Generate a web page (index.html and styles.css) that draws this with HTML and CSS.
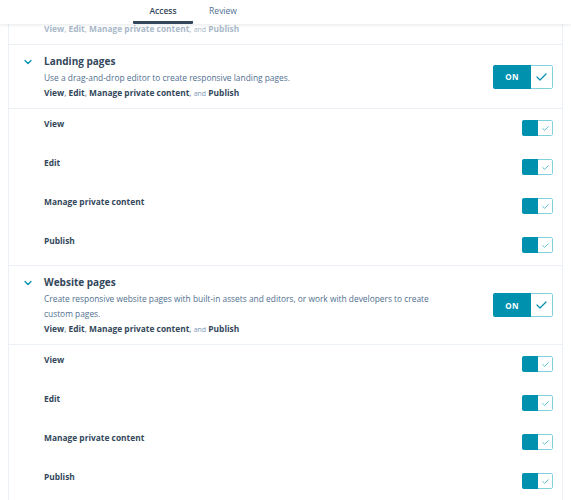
FILE: index.html
```html
<!DOCTYPE html>
<html lang="en">
<head>
    <meta charset="UTF-8">
    <meta name="viewport" content="width=device-width, initial-scale=1.0">
    <title>Permissions - Access</title>
    <link rel="stylesheet" href="styles.css">
</head>
<body>
    <div class="tabs">
        <div class="tab active">Access</div>
        <div class="tab">Review</div>
    </div>
    <div class="panel">
        <div class="row-partial">
            <div class="perms faded"><b>View</b>, <b>Edit</b>, <b>Manage private content</b>, <span class="and">and</span> <b>Publish</b></div>
        </div>

        <div class="section">
            <div class="chevron"><svg width="8" height="6" viewBox="0 0 8 6"><path d="M1 1.5 L4 4.5 L7 1.5" fill="none" stroke="#0091ae" stroke-width="1.3" stroke-linecap="round" stroke-linejoin="round"/></svg></div>
            <div class="section-text">
                <div class="title">Landing pages</div>
                <div class="desc">Use a drag-and-drop editor to create responsive landing pages.</div>
                <div class="perms"><b>View</b>, <b>Edit</b>, <b>Manage private content</b>, <span class="and">and</span> <b>Publish</b></div>
            </div>
            <div class="toggle big">
                <span class="on">ON</span>
                <span class="check"><svg width="11" height="8" viewBox="0 0 11 8"><path d="M1 4 L4 7 L10 1" fill="none" stroke="#0091ae" stroke-width="1.2" stroke-linecap="round" stroke-linejoin="round"/></svg></span>
            </div>
        </div>
        <div class="sub">
            <div class="sub-row"><div class="label">View</div><div class="toggle small"><span class="on"></span><span class="check"><svg width="7" height="5" viewBox="0 0 7 5"><path d="M0.7 2.5 L2.6 4.3 L6.3 0.7" fill="none" stroke="#4bb5cb" stroke-width="0.9" stroke-linecap="round" stroke-linejoin="round"/></svg></span></div></div>
            <div class="sub-row"><div class="label">Edit</div><div class="toggle small"><span class="on"></span><span class="check"><svg width="7" height="5" viewBox="0 0 7 5"><path d="M0.7 2.5 L2.6 4.3 L6.3 0.7" fill="none" stroke="#4bb5cb" stroke-width="0.9" stroke-linecap="round" stroke-linejoin="round"/></svg></span></div></div>
            <div class="sub-row"><div class="label">Manage private content</div><div class="toggle small"><span class="on"></span><span class="check"><svg width="7" height="5" viewBox="0 0 7 5"><path d="M0.7 2.5 L2.6 4.3 L6.3 0.7" fill="none" stroke="#4bb5cb" stroke-width="0.9" stroke-linecap="round" stroke-linejoin="round"/></svg></span></div></div>
            <div class="sub-row"><div class="label">Publish</div><div class="toggle small"><span class="on"></span><span class="check"><svg width="7" height="5" viewBox="0 0 7 5"><path d="M0.7 2.5 L2.6 4.3 L6.3 0.7" fill="none" stroke="#4bb5cb" stroke-width="0.9" stroke-linecap="round" stroke-linejoin="round"/></svg></span></div></div>
        </div>

        <div class="section">
            <div class="chevron"><svg width="8" height="6" viewBox="0 0 8 6"><path d="M1 1.5 L4 4.5 L7 1.5" fill="none" stroke="#0091ae" stroke-width="1.3" stroke-linecap="round" stroke-linejoin="round"/></svg></div>
            <div class="section-text">
                <div class="title">Website pages</div>
                <div class="desc">Create responsive website pages with built-in assets and editors, or work with developers to create custom pages.</div>
                <div class="perms"><b>View</b>, <b>Edit</b>, <b>Manage private content</b>, <span class="and">and</span> <b>Publish</b></div>
            </div>
            <div class="toggle big">
                <span class="on">ON</span>
                <span class="check"><svg width="11" height="8" viewBox="0 0 11 8"><path d="M1 4 L4 7 L10 1" fill="none" stroke="#0091ae" stroke-width="1.2" stroke-linecap="round" stroke-linejoin="round"/></svg></span>
            </div>
        </div>
        <div class="sub">
            <div class="sub-row"><div class="label">View</div><div class="toggle small"><span class="on"></span><span class="check"><svg width="7" height="5" viewBox="0 0 7 5"><path d="M0.7 2.5 L2.6 4.3 L6.3 0.7" fill="none" stroke="#4bb5cb" stroke-width="0.9" stroke-linecap="round" stroke-linejoin="round"/></svg></span></div></div>
            <div class="sub-row"><div class="label">Edit</div><div class="toggle small"><span class="on"></span><span class="check"><svg width="7" height="5" viewBox="0 0 7 5"><path d="M0.7 2.5 L2.6 4.3 L6.3 0.7" fill="none" stroke="#4bb5cb" stroke-width="0.9" stroke-linecap="round" stroke-linejoin="round"/></svg></span></div></div>
            <div class="sub-row"><div class="label">Manage private content</div><div class="toggle small"><span class="on"></span><span class="check"><svg width="7" height="5" viewBox="0 0 7 5"><path d="M0.7 2.5 L2.6 4.3 L6.3 0.7" fill="none" stroke="#4bb5cb" stroke-width="0.9" stroke-linecap="round" stroke-linejoin="round"/></svg></span></div></div>
            <div class="sub-row"><div class="label">Publish</div><div class="toggle small"><span class="on"></span><span class="check"><svg width="7" height="5" viewBox="0 0 7 5"><path d="M0.7 2.5 L2.6 4.3 L6.3 0.7" fill="none" stroke="#4bb5cb" stroke-width="0.9" stroke-linecap="round" stroke-linejoin="round"/></svg></span></div></div>
        </div>
    </div>
</body>
</html>
```
FILE: styles.css
```css
body {
    margin: 0;
    font-family: "Open Sans", "Noto Sans", sans-serif;
    color: #33475b;
    background: #fff;
    overflow: hidden;
}
.tabs {
    height: 24px;
    display: flex;
    padding-left: 133px;
    background: #fff;
    box-shadow: 0 1px 3px rgba(45, 62, 80, 0.12);
    position: relative;
    z-index: 1;
}
.tab {
    width: 60px;
    height: 24px;
    line-height: 22px;
    text-align: center;
    font-size: 8.5px;
    color: #516f90;
    box-sizing: border-box;
}
.tab.active {
    font-weight: 600;
    color: #33475b;
    border-bottom: 3px solid #33475b;
    border-radius: 0 0 1px 1px;
}
.panel {
    margin: 0 8px;
    border-left: 1px solid #eaf0f6;
    border-right: 1px solid #eaf0f6;
}
.row-partial {
    height: 20px;
    padding-left: 35px;
    border-bottom: 1px solid #eaf0f6;
}
.row-partial .perms {
    line-height: 10px;
}
.perms {
    font-size: 8.4px;
    line-height: 15px;
    color: #516f90;
}
.perms b {
    font-weight: 700;
    color: #33475b;
}
.perms .and {
    font-size: 7px;
    line-height: 1;
    color: #7c98b6;
}
.perms.faded, .perms.faded b, .perms.faded .and {
    color: #a9b8c9;
}
.section {
    display: flex;
    align-items: center;
    padding: 8px 9px 8px 15px;
    border-bottom: 1px solid #eaf0f6;
}
.chevron {
    width: 20px;
    align-self: flex-start;
    padding-top: 6px;
}
.chevron svg {
    display: block;
}
.section-text {
    flex: 1;
    padding-right: 50px;
}
.title {
    font-size: 10px;
    font-weight: 700;
    line-height: 17px;
}
.desc {
    font-size: 8.4px;
    line-height: 15px;
    color: #516f90;
}
.toggle {
    display: flex;
    box-sizing: border-box;
    border-radius: 2px;
    overflow: hidden;
    flex-shrink: 0;
}
.toggle .on {
    background: #0091ae;
    color: #fff;
    font-weight: 700;
    display: flex;
    align-items: center;
    justify-content: center;
}
.toggle .check {
    background: #fff;
    border: 1px solid #7fd1de;
    border-left: none;
    border-radius: 0 2px 2px 0;
    display: flex;
    align-items: center;
    justify-content: center;
    box-sizing: border-box;
}
.toggle.big {
    width: 60px;
    height: 24px;
}
.toggle.big .on {
    width: 38px;
    font-size: 8px;
    letter-spacing: 0.3px;
}
.toggle.big .check {
    width: 22px;
}
.sub {
    border-bottom: 1px solid #eaf0f6;
}
.sub-row {
    display: flex;
    justify-content: space-between;
    align-items: flex-start;
    height: 39px;
    padding: 0 9px 0 35px;
}
.label {
    font-size: 8.4px;
    font-weight: 700;
    line-height: 13px;
    padding-top: 8px;
}
.toggle.small {
    width: 31px;
    height: 16px;
    margin-top: 11px;
}
.toggle.small .on {
    width: 16px;
}
.toggle.small .check {
    width: 15px;
}
```
